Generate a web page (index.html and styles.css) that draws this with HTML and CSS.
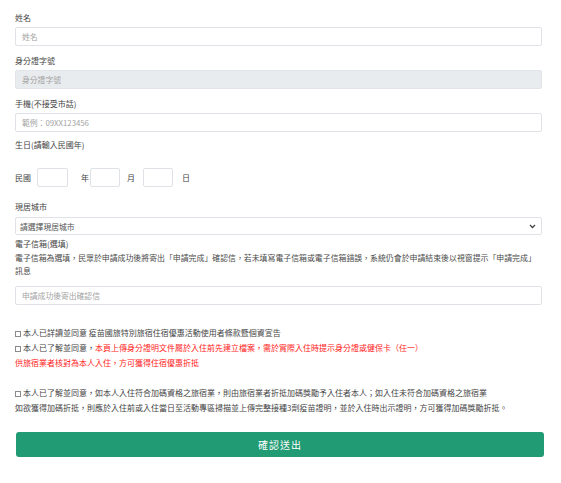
FILE: index.html
```html
<!DOCTYPE html>
<html lang="zh-Hant">
<head>
<meta charset="utf-8">
<link rel="stylesheet" href="styles.css">
</head>
<body>
<form class="form">
  <div class="group">
    <div class="label">姓名</div>
    <input class="input" type="text" placeholder="姓名">
  </div>
  <div class="group">
    <div class="label">身分證字號</div>
    <input class="input input-disabled" type="text" placeholder="身分證字號" disabled>
  </div>
  <div class="group group-tight">
    <div class="label">手機(不接受市話)</div>
    <input class="input" type="text" placeholder="範例：09XX123456">
  </div>
  <div class="group group-date">
    <div class="label">生日(請輸入民國年)</div>
    <div class="date-row">
      <span class="unit">民國</span>
      <input class="date-box box-1" type="text">
      <span class="unit unit-year">年</span>
      <input class="date-box box-2" type="text">
      <span class="unit unit-month">月</span>
      <input class="date-box box-3" type="text">
      <span class="unit unit-day">日</span>
    </div>
  </div>
  <div class="group group-city">
    <div class="label label-city">現居城市</div>
    <div class="select">
      <span>請選擇現居城市</span>
      <svg class="chevron" width="7" height="5" viewBox="0 0 7 5"><path d="M1 1 L3.5 3.5 L6 1" fill="none" stroke="#444" stroke-width="1.3"/></svg>
    </div>
  </div>
  <div class="group group-mail">
    <div class="label label-mail">電子信箱(選填)</div>
    <p class="desc">電子信箱為選填，民眾於申請成功後將寄出「申請完成」確認信，若未填寫電子信箱或電子信箱錯誤，系統仍會於申請結束後以視窗提示「申請完成」訊息</p>
    <input class="input" type="text" placeholder="申請成功後寄出確認信">
  </div>
  <div class="checks">
    <p class="check"><span class="box"></span>本人已詳讀並同意 疫苗國旅特別旅宿住宿優惠活動使用者條款暨個資宣告</p>
    <p class="check"><span class="box"></span>本人已了解並同意，<span class="red">本頁上傳身分證明文件屬於入住前先建立檔案，需於實際入住時提示身分證或健保卡（任一）<br>供旅宿業者核對為本人入住，方可獲得住宿優惠折抵</span></p>
    <p class="check check-last"><span class="box"></span>本人已了解並同意，如本人入住符合加碼資格之旅宿業，則由旅宿業者折抵加碼獎勵予入住者本人；如入住未符合加碼資格之旅宿業<br>如欲獲得加碼折抵，則應於入住前或入住當日至活動專區掃描並上傳完整接種3劑疫苗證明，並於入住時出示證明，方可獲得加碼獎勵折抵。</p>
  </div>
  <button class="submit" type="button">確認送出</button>
</form>
</body>
</html>
```
FILE: styles.css
```css
* { box-sizing: border-box; }
html, body { margin: 0; padding: 0; background: #fff; }
body {
  font-family: "Noto Sans CJK TC", "Liberation Sans", sans-serif;
  color: #444;
}
.form {
  width: 561px;
  padding: 12px 19px 0 15px;
}
.group { margin-bottom: 9px; }
.group-tight { margin-bottom: 7px; }
.group-date { margin-bottom: 14px; }
.group-city { margin-bottom: 3px; }
.label {
  font-size: 8px;
  line-height: 12px;
  height: 12px;
  margin-bottom: 3px;
  color: #444;
  white-space: nowrap;
}
.label-city { margin-bottom: 4px; }
.label-mail { margin-bottom: 1px; }
.input {
  display: block;
  width: 527px;
  height: 19px;
  margin: 0;
  padding: 0 6px;
  border: 1px solid #dfe2e6;
  border-radius: 2px;
  background: #fff;
  font-family: inherit;
  font-size: 7.8px;
  color: #444;
  outline: none;
}
.input::placeholder { color: #a3a3a3; }
.input-disabled { background: #e9ecef; border-color: #e1e4e8; }
.date-row {
  display: flex;
  align-items: center;
  margin-top: 17px;
  height: 19px;
}
.unit { font-size: 8px; line-height: 19px; color: #444; }
.date-box {
  width: 31px;
  height: 19px;
  margin: 0;
  padding: 0;
  border: 1px solid #dfe2e6;
  border-radius: 2px;
  background: #fff;
  outline: none;
}
.box-1 { margin-left: 6px; width: 31px; }
.unit-year { margin-left: 13px; }
.box-2 { margin-left: 1px; width: 30px; }
.unit-month { margin-left: 7px; }
.box-3 { margin-left: 8px; width: 30px; }
.unit-day { margin-left: 9px; }
.select {
  display: flex;
  align-items: center;
  justify-content: space-between;
  width: 527px;
  height: 18px;
  padding: 0 5px 0 4px;
  border: 1px solid #dfe2e6;
  border-radius: 2px;
  font-size: 7.8px;
  color: #555;
}
.chevron { display: block; }
.desc {
  margin: 0 0 9px;
  font-size: 7.9px;
  line-height: 13px;
  color: #4a4a4a;
  width: 526px;
}
.checks { margin-top: 20px; }
.check {
  margin: 0;
  font-size: 8px;
  line-height: 15px;
  color: #444;
  white-space: nowrap;
}
.check-last { margin-top: 15px; }
.box {
  display: inline-block;
  width: 6px;
  height: 6px;
  border: 1px solid #8a8a8a;
  margin-right: 2px;
  vertical-align: -0.5px;
}
.red { color: #f22; }
.submit {
  display: block;
  width: 528px;
  height: 25px;
  margin: 17px 0 0 1px;
  padding: 0;
  border: none;
  border-radius: 3px;
  background: #219b74;
  color: #fff;
  font-family: inherit;
  font-size: 10px;
  letter-spacing: 1px;
  cursor: pointer;
}
```
